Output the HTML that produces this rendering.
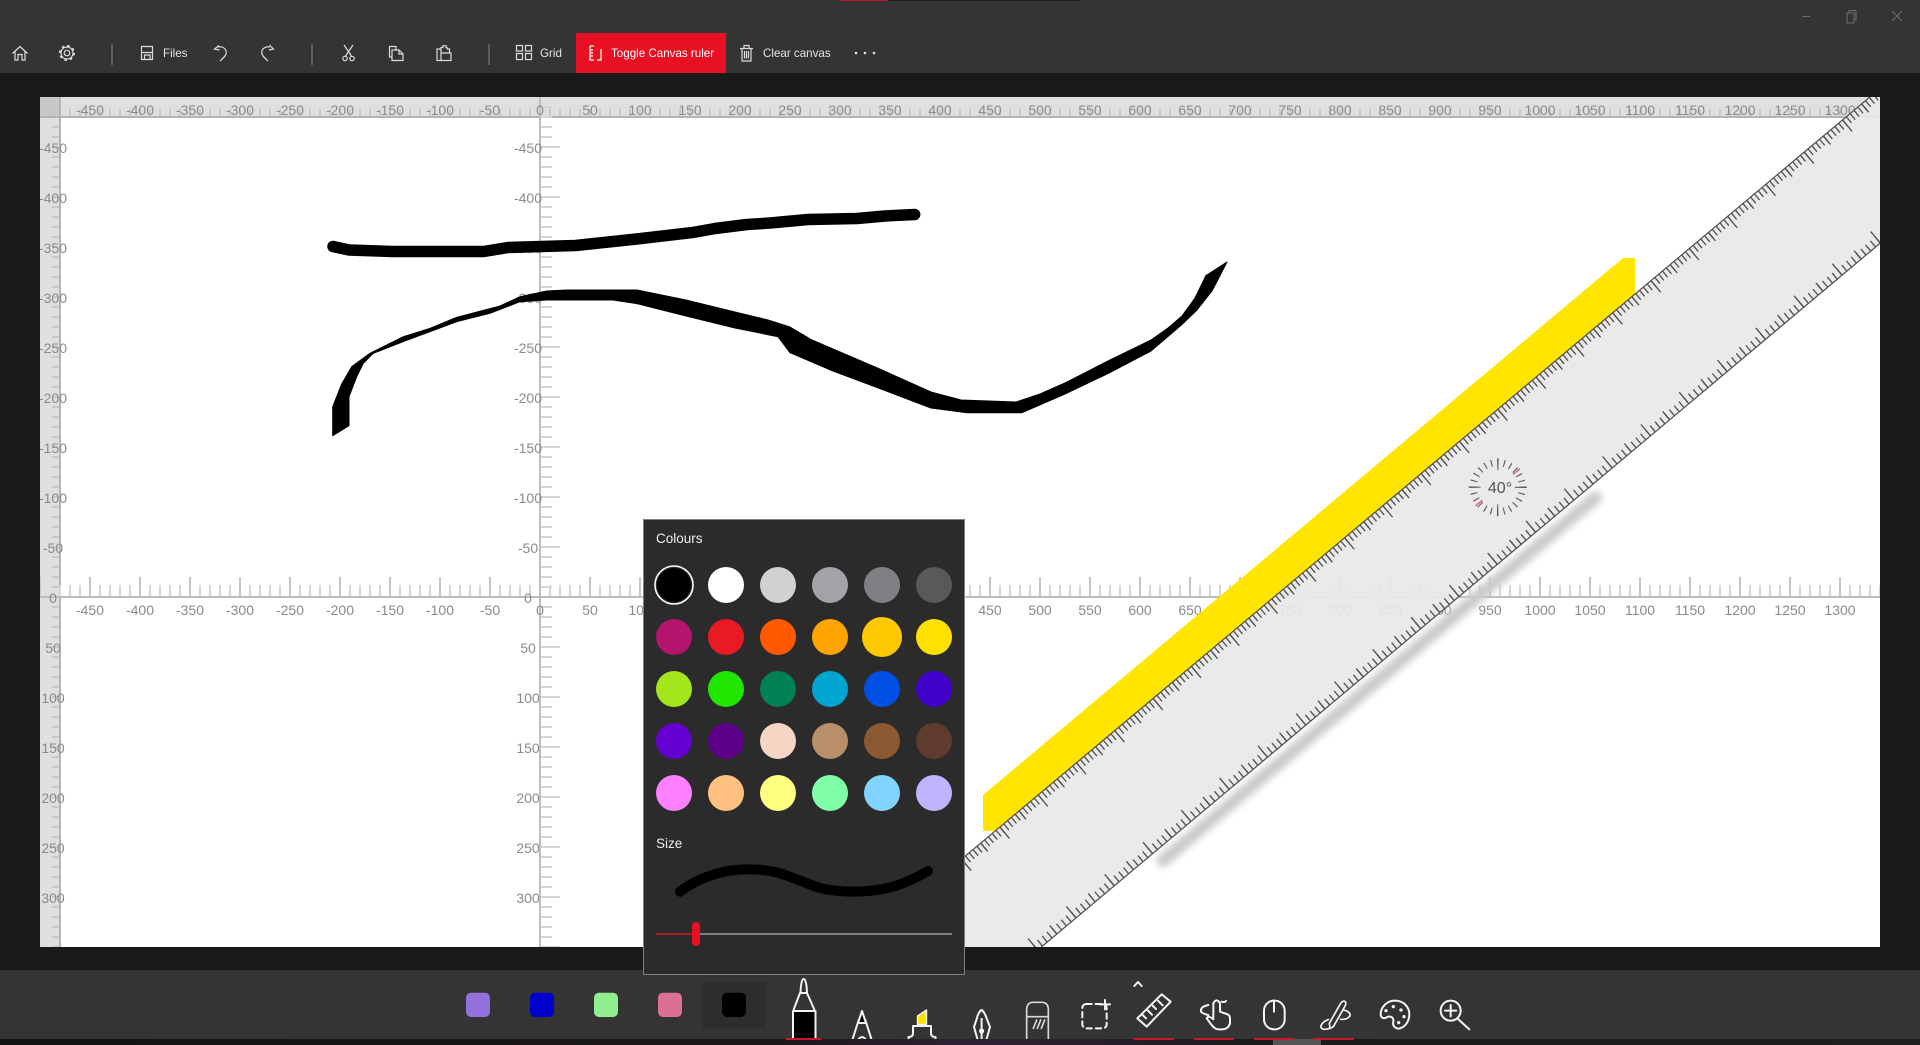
<!DOCTYPE html>
<html lang="en"><head><meta charset="utf-8"><title>Canvas</title>
<style>
html,body{margin:0;padding:0;background:#1a1a1a;width:1920px;height:1045px;overflow:hidden}
svg{display:block;font-family:"Liberation Sans",sans-serif}
.lb text{font-size:14px;fill:#8a8a8a;text-anchor:middle}
.tb{fill:none;stroke:#dcdcdc;stroke-width:1.2}
.tt text{font-size:11.6px;fill:#e4e4e4}
.bi{fill:none;stroke:#f4f4f4;stroke-width:6;stroke-linecap:round;stroke-linejoin:round}
</style></head><body>
<svg width="1920" height="1045" viewBox="0 0 1920 1045" xmlns="http://www.w3.org/2000/svg">
<defs>
<clipPath id="cv"><rect x="40" y="97" width="1840" height="850"/></clipPath>
<clipPath id="bb"><rect x="0" y="970" width="1920" height="69"/></clipPath>
<filter id="bl" x="-10%" y="-150%" width="120%" height="400%"><feGaussianBlur stdDeviation="3.5"/></filter>
</defs>
<rect width="1920" height="1045" fill="#1a1a1a"/>
<!-- top bar -->
<rect width="1920" height="73" fill="#343434"/>
<rect x="840" width="48" height="1" fill="#b0202e"/><rect x="888" width="192" height="1" fill="#1f1f1f"/>
<g fill="none" stroke="#6c6c6c" stroke-width="1.1">
<path d="M1802 16.5H1810"/><path d="M1847 13H1854V23H1847ZM1849 13V10.5H1856V20H1854"/><path d="M1892 11L1902 21M1902 11L1892 21"/>
</g>
<!-- canvas -->
<g clip-path="url(#cv)">
<rect x="40" y="97" width="1840" height="850" fill="#fff"/>
<rect x="40" y="97" width="1840" height="20" fill="#dfdfdf"/>
<rect x="40" y="97" width="20" height="850" fill="#dfdfdf"/>
<rect x="40" y="97" width="20" height="20" fill="#c8c8c8"/>
<line x1="39.25" x2="1880" y1="112.5" y2="112.5" stroke="#c2c2c2" stroke-width="7" stroke-dasharray="1.5 8.5"/>
<line x1="55.5" x2="55.5" y1="116" y2="947" stroke="#c8c8c8" stroke-width="7" stroke-dasharray="2 8"/>
<line x1="40" x2="1880" y1="117" y2="117" stroke="#b4b4b4" stroke-width="2"/>
<line x1="60" x2="60" y1="97" y2="947" stroke="#b4b4b4" stroke-width="2"/>
<!-- axes -->
<line x1="59" x2="1880" y1="591" y2="591" stroke="#d6d6d6" stroke-width="12" stroke-dasharray="2 8" stroke-dashoffset="20"/>
<line x1="39" x2="1880" y1="587" y2="587" stroke="#c6c6c6" stroke-width="20" stroke-dasharray="2 48"/>
<line x1="546.5" x2="546.5" y1="96" y2="947" stroke="#d6d6d6" stroke-width="11" stroke-dasharray="2 8"/>
<line x1="550.5" x2="550.5" y1="96" y2="947" stroke="#d6d6d6" stroke-width="19" stroke-dasharray="2 48"/>
<line x1="540" x2="540" y1="97" y2="947" stroke="#bdbdbd" stroke-width="2"/>
<line x1="40" x2="1880" y1="597" y2="597" stroke="#bdbdbd" stroke-width="2"/>
<!-- labels -->
<g class="lb">
<text x="90" y="115">-450</text><text x="140" y="115">-400</text><text x="190" y="115">-350</text><text x="240" y="115">-300</text><text x="290" y="115">-250</text><text x="340" y="115">-200</text><text x="390" y="115">-150</text><text x="440" y="115">-100</text><text x="490" y="115">-50</text><text x="540" y="115">0</text><text x="590" y="115">50</text><text x="640" y="115">100</text><text x="690" y="115">150</text><text x="740" y="115">200</text><text x="790" y="115">250</text><text x="840" y="115">300</text><text x="890" y="115">350</text><text x="940" y="115">400</text><text x="990" y="115">450</text><text x="1040" y="115">500</text><text x="1090" y="115">550</text><text x="1140" y="115">600</text><text x="1190" y="115">650</text><text x="1240" y="115">700</text><text x="1290" y="115">750</text><text x="1340" y="115">800</text><text x="1390" y="115">850</text><text x="1440" y="115">900</text><text x="1490" y="115">950</text><text x="1540" y="115">1000</text><text x="1590" y="115">1050</text><text x="1640" y="115">1100</text><text x="1690" y="115">1150</text><text x="1740" y="115">1200</text><text x="1790" y="115">1250</text><text x="1840" y="115">1300</text>
<text x="90" y="615">-450</text><text x="140" y="615">-400</text><text x="190" y="615">-350</text><text x="240" y="615">-300</text><text x="290" y="615">-250</text><text x="340" y="615">-200</text><text x="390" y="615">-150</text><text x="440" y="615">-100</text><text x="490" y="615">-50</text><text x="540" y="615">0</text><text x="590" y="615">50</text><text x="640" y="615">100</text><text x="690" y="615">150</text><text x="740" y="615">200</text><text x="790" y="615">250</text><text x="840" y="615">300</text><text x="890" y="615">350</text><text x="940" y="615">400</text><text x="990" y="615">450</text><text x="1040" y="615">500</text><text x="1090" y="615">550</text><text x="1140" y="615">600</text><text x="1190" y="615">650</text><text x="1240" y="615">700</text><text x="1290" y="615">750</text><text x="1340" y="615">800</text><text x="1390" y="615">850</text><text x="1440" y="615">900</text><text x="1490" y="615">950</text><text x="1540" y="615">1000</text><text x="1590" y="615">1050</text><text x="1640" y="615">1100</text><text x="1690" y="615">1150</text><text x="1740" y="615">1200</text><text x="1790" y="615">1250</text><text x="1840" y="615">1300</text>
<text x="53" y="153">-450</text><text x="53" y="203">-400</text><text x="53" y="253">-350</text><text x="53" y="303">-300</text><text x="53" y="353">-250</text><text x="53" y="403">-200</text><text x="53" y="453">-150</text><text x="53" y="503">-100</text><text x="53" y="553">-50</text><text x="53" y="603">0</text><text x="53" y="653">50</text><text x="53" y="703">100</text><text x="53" y="753">150</text><text x="53" y="803">200</text><text x="53" y="853">250</text><text x="53" y="903">300</text>
<text x="528" y="153">-450</text><text x="528" y="203">-400</text><text x="528" y="253">-350</text><text x="528" y="303">-300</text><text x="528" y="353">-250</text><text x="528" y="403">-200</text><text x="528" y="453">-150</text><text x="528" y="503">-100</text><text x="528" y="553">-50</text><text x="528" y="603">0</text><text x="528" y="653">50</text><text x="528" y="703">100</text><text x="528" y="753">150</text><text x="528" y="803">200</text><text x="528" y="853">250</text><text x="528" y="903">300</text>
</g>
<!-- strokes -->
<path d="M333 246.5L349 250L392 251.5L483.7 251.5L508 247.5L575.5 245.5L636.7 239L692 232.6L715 228.5L747 224.5L770 223L808 219.5L857 218.5L885 216L914.7 214.5" fill="none" stroke="#000" stroke-width="11.5" stroke-linecap="round" stroke-linejoin="round"/>
<polygon fill="#000" stroke="#000" stroke-width="1" stroke-linejoin="round" points="332.7,406.7 341.7,384 351.7,366.7 370,353.3 403.3,336.7 430,328.3 456.7,317.3 500,306 520,296.7 546.7,291 566.7,290 620,290 637,290 686,300 735,312 768,320 790,327 812,340 833,349 882,370 931,392 961,400 1016,402 1040,394 1065,383 1108,361 1151,340 1168,328 1182,316 1195,298 1206,275.5 1227,262 1212,291 1197,310 1182,324.5 1151,351 1108,373.5 1065,394 1022,412.7 967,412.7 931,408 882,389.4 833,371 790,352.7 778,336.7 735,328 686,316 637,303.7 613,300 546.7,300 520,301.7 490,313.3 456.7,321.7 430,331.7 403,341.7 373.3,353.3 363.3,363.3 356.7,376.7 349,396.7 349,425.7 332.7,435.7"/>
<!-- highlighter -->
<polygon points="983,795 1623,258 1635,258 1635,295 997,831 983,831" fill="#ffe500"/>
<!-- ruler -->
<g transform="translate(1880,88.5) rotate(-40)">
<rect x="-1052" y="124" width="577" height="13" rx="6" fill="#cbcbcb" filter="url(#bl)"/>
<rect x="-1300" y="0" width="1400" height="118.6" fill="#e8e8e8" fill-opacity=".93"/>
<g stroke="#4e4e4e" fill="none">
<line x1="-1300" x2="100" y1="0" y2="0" stroke-width="1.2"/>
<line x1="-1299.6" x2="100" y1="4" y2="4" stroke-width="8" stroke-dasharray="1.3 3.7"/>
<line x1="-1274.6" x2="100" y1="5.5" y2="5.5" stroke-width="11" stroke-dasharray="1.3 48.7"/>
<line x1="-1299.6" x2="100" y1="7.5" y2="7.5" stroke-width="15" stroke-dasharray="1.3 48.7"/>
<line x1="-1300" x2="100" y1="118.6" y2="118.6" stroke-width="1.2"/>
<line x1="-1299.7" x2="100" y1="114.6" y2="114.6" stroke-width="8" stroke-dasharray="1.3 4.95"/>
<line x1="-1274.7" x2="100" y1="113.1" y2="113.1" stroke-width="11" stroke-dasharray="1.3 48.7"/>
<line x1="-1299.7" x2="100" y1="111.1" y2="111.1" stroke-width="15" stroke-dasharray="1.3 48.7"/>
</g>
</g>
<!-- dial -->
<g fill="none" stroke="#5a5a5a" stroke-width="1.2">
<circle cx="1497.7" cy="487.3" r="24.5" stroke-width="7" stroke-dasharray="1.1 5.3135" transform="rotate(-1.3 1497.7 487.3)"/>
<circle cx="1497.7" cy="487.3" r="23" stroke-width="12" stroke-dasharray="1.2 34.93" transform="rotate(-1.5 1497.7 487.3)"/>
<path d="M1513 474.4L1519.9 468.7M1482.4 500.2L1475.5 505.9" stroke="#e0506a" stroke-width="1.3"/>
</g>
<text x="1500" y="493" font-size="16" fill="#555" text-anchor="middle">40°</text>
</g>
<!-- top toolbar -->
<rect x="576" y="33" width="150" height="40" fill="#e81123"/>
<g class="tb">
<path d="M12.5 53.5L20 46.5L27.5 53.5M15 51.5V60H18V54.5H22V60H25V51.5"/>
<circle cx="67" cy="53" r="2.8"/><circle cx="67" cy="53" r="6"/><circle cx="67" cy="53" r="7" stroke-width="2" stroke-dasharray="2.5 3"/>
<path d="M112 44V65M312 44V65M489 44V65" stroke="#7a7a7a"/>
<path d="M141.5 46.5H152.5V59.5H141.5ZM141.5 52.5H152.5M144.5 59.5V55H150V59.5"/>
<path d="M218 47C224 46 227 50 226 54C225 57 222 59 220 61M219 45.5L214.5 49L219.5 50"/>
<path d="M270 47C263 46 261 51 262 54C263 57 266 59 268 61M269.5 45L273.5 49L269 50"/>
<path d="M344 45L351.5 56M353 45L345.5 56"/><circle cx="345" cy="58.5" r="2.2"/><circle cx="352" cy="58.5" r="2.2"/>
<path d="M392 57H389.5V46.5H396V50M392 50H399L403 54V60.5H392ZM399 50V54H403"/>
<path d="M441 49H437V60.5H441M441 53H451V60.5H441ZM441 53V49M447 49H449.5V53M441 49V47.5H443V45.7H446V47.5H447V49"/>
<path d="M516.5 45.5H522.5V51H516.5ZM525.5 45.5H531.5V51H525.5ZM516.5 53.5H522.5V59.5H516.5ZM525.5 53.5H531.5V59.5H525.5Z"/>
<path d="M590 46V60H594M590 46H594M590 50H593M590 53H593M590 56H593M601 49V60H597" stroke="#fff"/>
<path d="M740 48.5H753M744 48.5V45.5H749V48.5M742 48.5V61H751V48.5M744.5 51V58.5M746.5 51V58.5M748.5 51V58.5"/>
</g>
<g fill="#e4e4e4"><circle cx="856" cy="53" r="1.3"/><circle cx="865" cy="53" r="1.3"/><circle cx="874" cy="53" r="1.3"/></g>
<g class="tt">
<text x="163" y="57">Files</text><text x="540" y="57">Grid</text><text x="611" y="57" style="fill:#fff">Toggle Canvas ruler</text><text x="763" y="57">Clear canvas</text>
</g>
<!-- bottom bar -->
<rect y="970" width="1920" height="69" fill="#343434"/>
<rect x="702.5" y="981.7" width="63.5" height="46.5" fill="#2d2d2d"/>
<rect x="466" y="992.7" width="24" height="24.3" rx="5" fill="#9370db"/>
<rect x="530" y="992.7" width="24" height="24.3" rx="5" fill="#0000cd"/>
<rect x="594" y="992.7" width="24" height="24.3" rx="5" fill="#90ee90"/>
<rect x="658" y="992.7" width="24" height="24.3" rx="5" fill="#db7093"/>
<rect x="722" y="992.7" width="24" height="24.3" rx="5" fill="#000"/>
<g clip-path="url(#bb)" fill="none" stroke="#f4f4f4" stroke-width="2" stroke-linejoin="round">
<rect x="793" y="1011" width="22.5" height="30" fill="#000"/>
<path d="M793.5 1010L800 993H807L814.5 1010"/>
<path d="M800.5 993Q801 979 803.6 979Q806.5 979 807 993Z"/>
<polygon points="862,1011 858,1023 866,1023" fill="#000"/>
<path d="M852 1041L859 1019M872 1041L865 1019M858 1040Q862 1034 866 1040"/>
<polygon points="917.5,1016 926.5,1010 926.5,1024.5 917.5,1024.5" fill="#ffe100" stroke-width="1.4"/>
<path d="M908.5 1041V1037Q913 1037 913 1033V1026H931V1033Q931 1037 935.5 1037V1041"/>
<path d="M981.6 1009.5Q978 1013 977 1018L974 1027L978 1041M981.6 1009.5Q985 1013 986.5 1018L990 1027L986 1041M981.6 1018V1041"/>
<circle cx="981.6" cy="1031" r="1.6" fill="#f4f4f4"/>
</g>
<g transform="translate(1000,960) scale(.33333)" class="bi">
<g stroke="#d8d8d8">
<path d="M80 238V150Q80 127 100 127H125Q145 127 145 150V238M80 170H145M100 205L110 180M112 205L122 180M124 205L134 180" stroke-width="5"/>
</g>
<rect x="247" y="132" width="73" height="73" rx="12" stroke-dasharray="16 12"/>
<path d="M315 120V148M300 133H330"/>
<path d="M403 78L414 66L425 78"/>
<path d="M412 175L485 103L512 125L440 200ZM428 165L438 175M442 150L456 164M458 137L468 147M474 122L488 136"/>
<path d="M640 175V130Q650 112 660 130V155L680 162Q690 165 690 175V190Q685 208 665 208H655Q645 208 635 195L620 175Q625 165 640 178M625 135Q600 140 603 155Q610 162 625 165M665 125Q675 128 678 123"/>
<rect x="792" y="122" width="62" height="86" rx="30"/><path d="M822 122V155"/>
<path d="M990 205L988 190L1022 130Q1030 120 1036 125Q1040 132 1033 142L1000 200ZM985 178Q960 190 963 203Q970 212 990 205M1030 150Q1052 155 1050 168Q1040 180 1022 178" stroke-width="5"/>
<path d="M1185 122C1160 122 1142 142 1142 163C1142 172 1150 178 1160 172C1170 166 1182 172 1180 185C1176 200 1190 208 1200 205C1220 198 1228 180 1228 163C1228 140 1210 122 1185 122Z"/>
<g fill="#f4f4f4" stroke="none"><circle cx="1158" cy="152" r="5"/><circle cx="1180" cy="140" r="5"/><circle cx="1203" cy="150" r="5"/><circle cx="1212" cy="170" r="5"/><circle cx="1196" cy="188" r="5"/></g>
<circle cx="1352" cy="152" r="30"/><path d="M1372 175L1408 208M1335 152H1369M1352 135V169"/>
</g>
<!-- bottom strip -->
<defs><linearGradient id="st" x1="0" x2="1"><stop offset="0" stop-color="#141414"/><stop offset=".4" stop-color="#1b1619"/><stop offset=".5" stop-color="#2e2033"/><stop offset=".56" stop-color="#2a1f2e"/><stop offset=".66" stop-color="#1a1a1a"/><stop offset="1" stop-color="#1e1e1e"/></linearGradient></defs>
<rect y="1039" width="1920" height="6" fill="url(#st)"/>
<rect x="1273" y="1039" width="48" height="6" fill="#555"/>
<g fill="#c8182a">
<rect x="786" y="1038" width="35.5" height="2"/><rect x="1134" y="1038" width="40" height="2"/><rect x="1194" y="1038" width="40" height="2"/><rect x="1254" y="1038" width="40" height="2"/><rect x="1314" y="1038" width="40" height="2"/>
</g>
<!-- popup -->
<rect x="643.5" y="519.5" width="321" height="455" fill="#2b2b2b" stroke="#808080"/>
<text x="656" y="543" font-size="13.5" fill="#eee">Colours</text>
<circle cx="674" cy="585" r="19" fill="none" stroke="#fff" stroke-width="1.6"/>
<circle cx="674" cy="585" r="17" fill="#000"/><circle cx="726" cy="585" r="18" fill="#fff"/><circle cx="778" cy="585" r="18" fill="#d0d1d3"/><circle cx="830" cy="585" r="18" fill="#a2a3a6"/><circle cx="882" cy="585" r="18" fill="#7f8083"/><circle cx="934" cy="585" r="18" fill="#58595b"/>
<circle cx="674" cy="637" r="18" fill="#b3146c"/><circle cx="726" cy="637" r="18" fill="#e81a24"/><circle cx="778" cy="637" r="18" fill="#ff5a00"/><circle cx="830" cy="637" r="18" fill="#ffa400"/><circle cx="882" cy="637" r="20" fill="#ffc800"/><circle cx="934" cy="637" r="18" fill="#ffe100"/>
<circle cx="674" cy="689" r="18" fill="#a3e619"/><circle cx="726" cy="689" r="18" fill="#22e600"/><circle cx="778" cy="689" r="18" fill="#008055"/><circle cx="830" cy="689" r="18" fill="#00a5d0"/><circle cx="882" cy="689" r="18" fill="#0050e6"/><circle cx="934" cy="689" r="18" fill="#3f00c8"/>
<circle cx="674" cy="741" r="18" fill="#6400d0"/><circle cx="726" cy="741" r="18" fill="#5c0087"/><circle cx="778" cy="741" r="18" fill="#f5d5c3"/><circle cx="830" cy="741" r="18" fill="#b88f69"/><circle cx="882" cy="741" r="18" fill="#8c5a32"/><circle cx="934" cy="741" r="18" fill="#5f3c2d"/>
<circle cx="674" cy="793" r="18" fill="#ff80ff"/><circle cx="726" cy="793" r="18" fill="#ffc080"/><circle cx="778" cy="793" r="18" fill="#ffff80"/><circle cx="830" cy="793" r="18" fill="#80ffa8"/><circle cx="882" cy="793" r="18" fill="#80d4ff"/><circle cx="934" cy="793" r="18" fill="#c0b4ff"/>
<text x="656" y="848" font-size="13.5" fill="#eee">Size</text>
<path d="M680 891.7C692 882 706 876 725 871.5C745 868 765 869 780 873.3C795 878 805 883 820 888C840 893 870 893 893 886.7C905 883 918 877 928 871" fill="none" stroke="#000" stroke-width="10" stroke-linecap="round"/>
<rect x="696" y="933" width="256" height="2" fill="#808080"/>
<rect x="656" y="933" width="40" height="2" fill="#b01c26"/>
<rect x="692" y="922" width="8" height="24" rx="4" fill="#e81123"/>
</svg>
</body></html>
